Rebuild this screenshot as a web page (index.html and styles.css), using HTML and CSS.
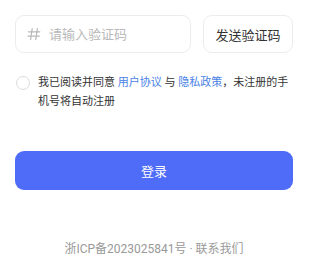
FILE: index.html
```html
<!DOCTYPE html>
<html lang="zh-CN">
<head>
<meta charset="utf-8">
<title>登录</title>
<link rel="stylesheet" href="styles.css">
</head>
<body>
<div class="page">
  <div class="code-row">
    <label class="code-input">
      <svg class="hash" width="14" height="14" viewBox="0 0 14 14" fill="none" stroke="currentColor" stroke-width="1.2" stroke-linecap="round">
        <path d="M5.2 1.5 L3.6 12.5"/>
        <path d="M10.4 1.5 L8.8 12.5"/>
        <path d="M1.5 4.8 H12.8"/>
        <path d="M1 9.2 H12.3"/>
      </svg>
      <input type="text" placeholder="请输入验证码">
    </label>
    <button class="send-btn" type="button">发送验证码</button>
  </div>

  <div class="agree">
    <span class="check"></span>
    <p class="agree-text">我已阅读并同意 <a href="#">用户协议</a> 与 <a href="#">隐私政策</a>，未注册的手机号将自动注册</p>
  </div>

  <button class="login-btn" type="button">登录</button>

  <footer class="footer">浙ICP备2023025841号 · 联系我们</footer>
</div>
</body>
</html>
```

FILE: styles.css
```css
* { box-sizing: border-box; }
html, body {
  margin: 0;
  padding: 0;
  background: #fff;
}
body {
  font-family: Roboto, "Noto Sans CJK SC", sans-serif;
  color: #333;
}
.page {
  padding: 15px 24px 0 15px;
  display: flex;
  flex-direction: column;
}
.code-row {
  display: flex;
  gap: 12px;
  height: 38px;
}
.code-input {
  flex: 1;
  min-width: 0;
  display: flex;
  align-items: center;
  gap: 8px;
  padding-left: 11px;
  border: 1px solid #ececec;
  border-radius: 9px;
}
.hash {
  color: #b8b8b8;
  flex: none;
}
.code-input input {
  flex: 1;
  width: 0;
  min-width: 0;
  border: 0;
  outline: 0;
  font: 13px Roboto, "Noto Sans CJK SC", sans-serif;
  color: #333;
  background: transparent;
  padding: 0;
}
.code-input input::placeholder { color: #b9b9b9; }
.send-btn {
  flex: none;
  width: 90px;
  border: 1px solid #ececec;
  border-radius: 9px;
  background: #fff;
  font: 13px Roboto, "Noto Sans CJK SC", sans-serif;
  color: #333;
  padding: 0;
  white-space: nowrap;
}
.agree {
  margin-top: 20px;
  display: flex;
  gap: 8px;
  align-items: flex-start;
}
.check {
  flex: none;
  width: 14px;
  height: 14px;
  border: 1px solid #dcdcdc;
  border-radius: 50%;
  margin-top: 3px;
  margin-left: 1px;
}
.agree-text {
  margin: 0;
  font-size: 11px;
  line-height: 19px;
  color: #333;
}
.agree-text a {
  color: #4a7fe6;
  text-decoration: none;
}
.login-btn {
  margin-top: 40px;
  height: 39px;
  border: 0;
  border-radius: 9px;
  background: #4f6cf8;
  color: #fff;
  font: 13px Roboto, "Noto Sans CJK SC", sans-serif;
  padding: 0;
}
.footer {
  margin-top: 50px;
  text-align: center;
  font-size: 12px;
  color: #999;
  line-height: 18px;
}
```
